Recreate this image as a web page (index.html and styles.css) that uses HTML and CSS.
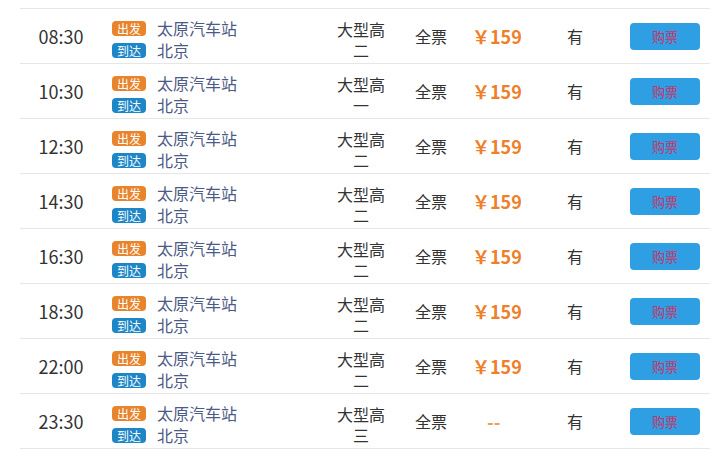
FILE: index.html
```html
<!DOCTYPE html>
<html lang="zh-CN">

<head>
    <meta charset="UTF-8" />
    <meta name="viewport" content="width=device-width, initial-scale=1" />
    <title>班次列表</title>
    <link rel="stylesheet" href="styles.css">
</head>

<body>
    <div class="list" id="list"></div>

    <script>
        (() => {
            const list = document.getElementById('list');
            const trips = [
                { time: '08:30', type: '大型高二', price: '159' },
                { time: '10:30', type: '大型高一', price: '159' },
                { time: '12:30', type: '大型高二', price: '159' },
                { time: '14:30', type: '大型高二', price: '159' },
                { time: '16:30', type: '大型高二', price: '159' },
                { time: '18:30', type: '大型高二', price: '159' },
                { time: '22:00', type: '大型高二', price: '159' },
                { time: '23:30', type: '大型高三', price: '' }
            ];

            trips.forEach(t => {
                const row = document.createElement('div');
                row.className = 'row';
                const price = t.price ?
                    `<span class="price">￥${t.price}</span>` :
                    `<span class="price none">--</span>`;
                row.innerHTML = `
                    <div class="time">${t.time}</div>
                    <div class="stops">
                        <div class="stop"><span class="tag from">出发</span><span class="name">太原汽车站</span></div>
                        <div class="stop"><span class="tag to">到达</span><span class="name">北京</span></div>
                    </div>
                    <div class="type">${t.type}</div>
                    <div class="ticket">全票</div>
                    <div class="price-cell">${price}</div>
                    <div class="seat">有</div>
                    <div class="action"><button class="buy">购票</button></div>`;
                list.appendChild(row);
            });
        })();
    </script>
</body>

</html>
```

FILE: styles.css
```css
body {
    margin: 0;
    padding: 8px 3px 0 20px;
    background-color: #fff;
    color: #333;
    font-family: "Microsoft YaHei", "Noto Sans CJK SC", sans-serif;
}

.list {
    width: 690px;
    border-top: 1px solid #e6e6e6;
}

.row {
    display: grid;
    grid-template-columns: 82px 228px 62px 78px 70px 70px 100px;
    align-items: center;
    height: 54px;
    border-bottom: 1px solid #e6e6e6;
}

.time {
    text-align: center;
    font-size: 18px;
    color: #333;
}

.stops {
    padding: 6px 0 0 10px;
    display: flex;
    flex-direction: column;
    gap: 4px;
}

.stop {
    display: flex;
    align-items: center;
    height: 18px;
}

.tag {
    display: inline-block;
    width: 34px;
    height: 15px;
    line-height: 15px;
    border-radius: 4px;
    color: #fff;
    font-size: 12px;
    text-align: center;
    margin-right: 11px;
}

.tag.from {
    background-color: #e8842c;
}

.tag.to {
    background-color: #1d86c6;
}

.name {
    font-size: 16px;
    color: #4c5a85;
}

.type {
    padding: 8px 7px 0;
    text-align: center;
    font-size: 16px;
    line-height: 21px;
    color: #333;
}

.ticket,
.seat {
    text-align: center;
    font-size: 16px;
    color: #333;
}

.price-cell {
    padding-left: 2px;
}

.price {
    font-size: 18px;
    font-weight: bold;
    color: #ee7f2b;
}

.price.none {
    padding-left: 15px;
    color: #e8a060;
}

.action {
    padding-left: 20px;
}

.buy {
    width: 70px;
    height: 27px;
    border: none;
    border-radius: 4px;
    background-color: #2e9fe2;
    color: #c8336b;
    font-family: inherit;
    font-size: 13px;
    cursor: pointer;
}
```
